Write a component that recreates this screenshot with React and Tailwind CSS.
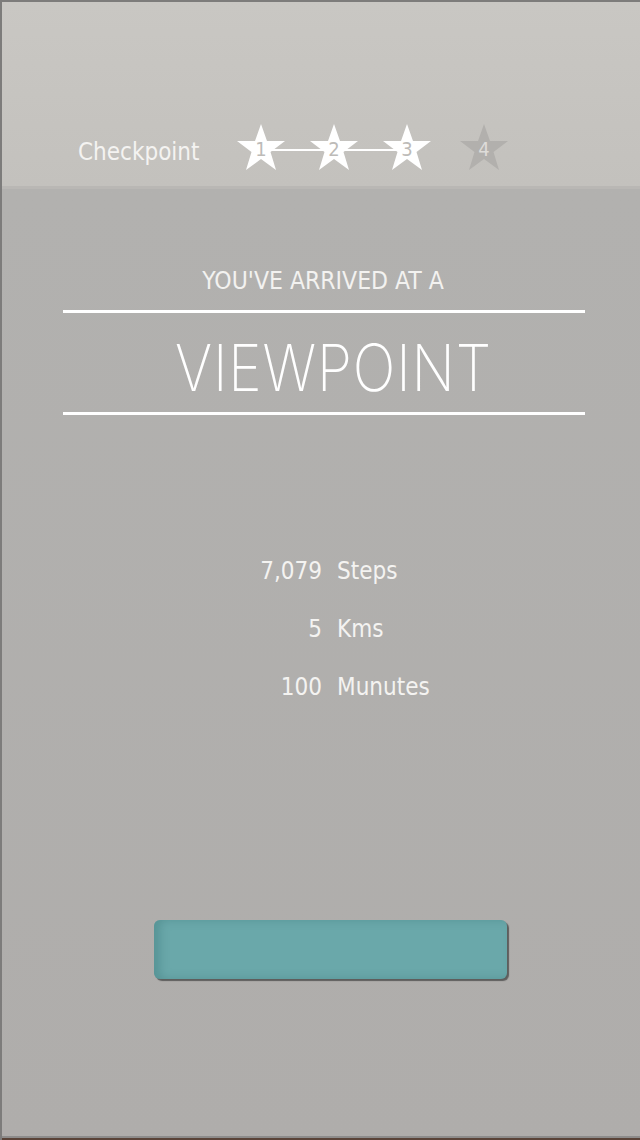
const stars = [
  { n: 1, done: true },
  { n: 2, done: true },
  { n: 3, done: true },
  { n: 4, done: false },
];

const stats = [
  { value: "7,079", label: "Steps" },
  { value: "5", label: "Kms" },
  { value: "100", label: "Munutes" },
];

function Star({ n, done }) {
  return (
    <div className="relative w-[50px] h-[48px] flex items-center justify-center">
      <svg viewBox="0 0 50 48" className="absolute inset-0 w-[50px] h-[48px]">
        <polygon
          points="25,1 31,18 49,18 34.5,29 40,47 25,36 10,47 15.5,29 1,18 19,18"
          fill={done ? "#ffffff" : "#b2b0ad"}
        />
      </svg>
      <span
        className={`relative mt-[4px] text-[20px] leading-none ${done ? "text-[#bdbbb8]" : "text-[#dedcd9]"}`}
      >
        {n}
      </span>
    </div>
  );
}

export default function App() {
  return (
    <div
      className="w-[640px] h-[1140px] flex flex-col border-t-2 border-l-2 border-[#7d7c7b] overflow-hidden"
      style={{ fontFamily: '"DejaVu Sans Condensed", "DejaVu Sans", sans-serif' }}
    >
      <header className="h-[187px] shrink-0 bg-gradient-to-b from-[#c9c7c3] to-[#c3c1bd] border-b-[3px] border-[#b9b7b4] flex items-end pb-[15px] pl-[76px]">
        <span className="w-[158px] shrink-0 text-[24px] text-[#f4f3f1] mb-[1px]">Checkpoint</span>
        <div className="relative flex items-center">
          <div className="absolute left-[25px] w-[146px] top-[26px] h-[2px] bg-white" />
          <Star {...stars[0]} />
          <div className="w-[23px]" />
          <Star {...stars[1]} />
          <div className="w-[23px]" />
          <Star {...stars[2]} />
          <div className="w-[27px]" />
          <Star {...stars[3]} />
        </div>
      </header>

      <main className="flex-1 bg-gradient-to-b from-[#b2b1af] to-[#afadab] flex flex-col">
        <p className="self-center ml-[4px] mt-[80px] text-[24.5px] text-[#f3f2f0] leading-none">
          YOU&apos;VE ARRIVED AT A
        </p>
        <div className="mt-[16px] ml-[61px] w-[522px] h-[3px] bg-white" />
        <h1
          className="self-start ml-[173px] mt-[22px] origin-left scale-x-[0.87] text-[65px] text-white font-extralight leading-none tracking-[1px]"
          style={{ fontFamily: "Inter, sans-serif" }}
        >
          VIEWPOINT
        </h1>
        <div className="mt-[12px] ml-[61px] w-[522px] h-[3px] bg-white" />

        <div className="mt-[144px] flex flex-col gap-[34px] text-[24px] text-[#f4f3f1] leading-none">
          {stats.map((s) => (
            <div key={s.label} className="grid grid-cols-[320px_1fr] gap-[15px]">
              <span className="text-right">{s.value}</span>
              <span>{s.label}</span>
            </div>
          ))}
        </div>

        <button className="mt-[221px] ml-[152px] w-[353px] h-[59px] rounded-[6px] bg-[#6aa8aa] shadow-[2px_2px_1px_rgba(60,60,60,0.7),inset_6px_0_8px_rgba(70,130,132,0.5)]" />
      </main>
      <div className="h-[2px] bg-[#8d8c8b] shrink-0" />
      <div className="h-[2px] bg-[#5a4338] shrink-0" />
    </div>
  );
}
